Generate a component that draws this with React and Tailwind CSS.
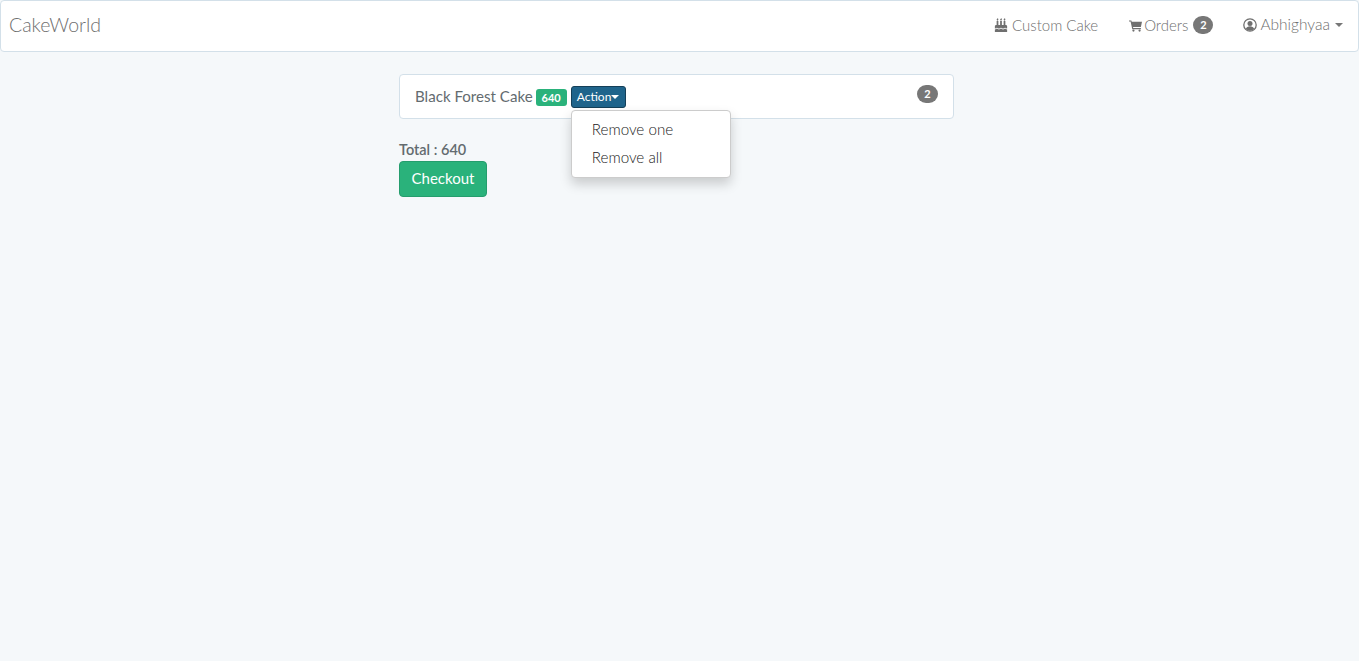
import { FaBirthdayCake } from "react-icons/fa";

function Pill({ children, className }) {
  return (
    <span className={`inline-flex h-[18px] items-center justify-center rounded-full bg-[#777777] text-[11px] font-bold text-white ${className}`}>
      {children}
    </span>
  );
}

function CartIcon() {
  return (
    <svg viewBox="0 0 14 14" className="h-[13px] w-[13px]" fill="currentColor">
      <path d="M0 1.5h2.5l.5 1.5h11l-1.2 5.6H4.3l.3 1.2h8.2v1.2H3.5L1.7 2.7H0z" />
      <circle cx="4.8" cy="12.4" r="1.2" />
      <circle cx="11.4" cy="12.4" r="1.2" />
    </svg>
  );
}

function UserIcon() {
  return (
    <svg viewBox="0 0 14 14" className="h-[14px] w-[14px]" fill="currentColor">
      <circle cx="7" cy="7" r="6.2" fill="none" stroke="currentColor" strokeWidth="1.3" />
      <circle cx="7" cy="5.4" r="2.5" />
      <path d="M2.8 11c.6-2 2.2-2.8 4.2-2.8s3.6.8 4.2 2.8a6 6 0 0 1-8.4 0z" />
    </svg>
  );
}

export default function App() {
  return (
    <div className="min-h-[661px] bg-[#f5f8fa] font-['Lato','Liberation_Sans',sans-serif] text-[15px] text-[#636b6f]">
      <nav className="flex h-[52px] items-center justify-between rounded-[4px] border border-[#d3e0e9] bg-white pb-[2px] pl-[8px] pr-[15px] text-[#6f6f6f]">
        <a className="text-[19.5px] font-light">CakeWorld</a>
        <div className="flex items-center font-light">
          <a className="flex items-center gap-[4px]">
            <FaBirthdayCake className="h-[14px] w-[14px]" /> Custom Cake
          </a>
          <a className="ml-[31px] flex items-center gap-[2px]">
            <CartIcon /> Orders <Pill className="ml-[3px] w-[20px]">2</Pill>
          </a>
          <a className="ml-[30px] flex items-center gap-[3px]">
            <UserIcon /> <span className="text-[15.5px]">Abhighyaa</span>
            <span className="ml-[2px] border-x-[4px] border-t-[4px] border-x-transparent border-t-[#777777]" />
          </a>
        </div>
      </nav>
      <main className="ml-[399px] mt-[22px] w-[555px]">
        <div className="flex h-[45px] items-start justify-between rounded-[4px] border border-[#d3e0e9] bg-white py-[10px] pl-[15px] pr-[15px]">
          <div className="flex items-center gap-[3px]">
            <span className="pb-[2px] text-[15.1px]">Black Forest Cake</span>
            <span className="rounded-[3px] bg-[#2ab27b] px-[6px] py-[1px] text-[11px] font-bold leading-[15px] text-white">640</span>
            <div className="relative ml-[1px]">
              <button className="flex h-[22px] items-center rounded-[3px] border border-[#143f58] bg-[#1f648b] pl-[5px] pr-[6px] text-[12px] text-white">
                Action
                <span className="border-x-[4px] border-t-[4px] border-x-transparent border-t-white" />
              </button>
              <div className="absolute left-0 top-[24px] z-10 w-[160px] rounded-[4px] border border-[#cccccc] bg-white pb-[6px] pt-[4px] text-[15.2px] font-light text-[#222222] shadow-[0_6px_12px_rgba(0,0,0,0.18)]">
                <div className="px-[20px] py-[4px] leading-[20px]">Remove one</div>
                <div className="px-[20px] py-[4px] leading-[20px]">Remove all</div>
              </div>
            </div>
          </div>
          <Pill className="w-[21px]">2</Pill>
        </div>
        <p className="mt-[21px] text-[14.5px] font-semibold leading-[20px]">Total : 640</p>
        <button className="mt-[1px] block h-[36px] w-[88px] rounded-[4px] border border-[#259d6d] bg-[#2ab27b] pb-[2px] text-white">
          Checkout
        </button>
      </main>
    </div>
  );
}
